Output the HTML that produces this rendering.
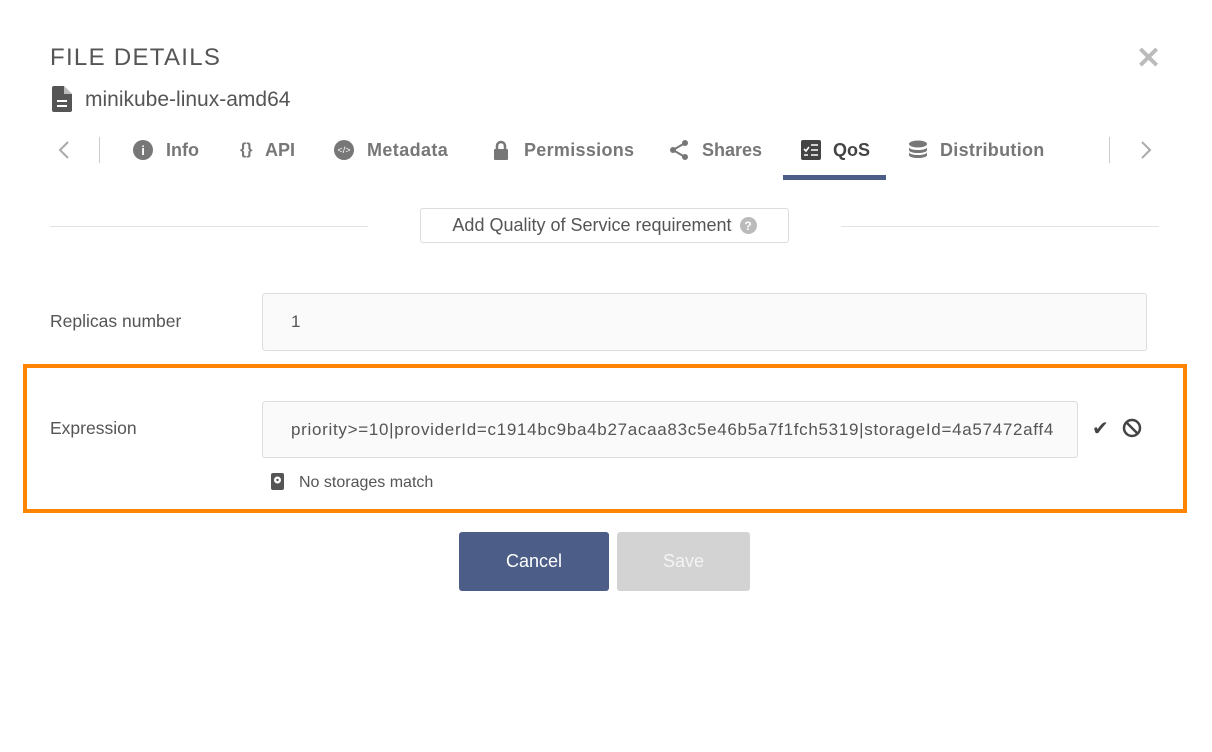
<!DOCTYPE html>
<html><head><meta charset="utf-8"><style>
body{margin:0;width:1212px;height:752px;background:#fff;font-family:"Liberation Sans",sans-serif;color:#555;position:relative;overflow:hidden}
.a{position:absolute}
.tab{position:absolute;top:140px;font-size:18px;font-weight:bold;color:#777;white-space:nowrap;line-height:20px}
.ic{position:absolute;top:140px}
</style></head><body>
<div class="a" style="left:50px;top:44px;font-size:24px;letter-spacing:1.3px;color:#555">FILE DETAILS</div>
<div class="a" style="left:1136px;top:44px;font-size:30px;color:#bbb;font-weight:bold;line-height:30px">✕</div>
<svg class="a" style="left:52px;top:86px" width="20" height="26" viewBox="0 0 20 26"><path d="M0 2Q0 0 2 0H12L20 8V24Q20 26 18 26H2Q0 26 0 24Z" fill="#555"/><path d="M12 0V8H20" fill="#fff" opacity=".6"/><rect x="5" y="14" width="10" height="2" fill="#fff"/><rect x="5" y="19" width="10" height="2" fill="#fff"/></svg>
<div class="a" style="left:85px;top:88px;font-size:21px;color:#555">minikube-linux-amd64</div>
<svg class="a" style="left:57px;top:140px" width="14" height="20" viewBox="0 0 14 20"><path d="M11 2L3 10l8 8" stroke="#aaa" stroke-width="2" fill="none"/></svg>
<div class="a" style="left:99px;top:137px;width:1px;height:26px;background:#ccc"></div>
<span class="ic" style="left:133px;width:20px;height:20px;border-radius:50%;background:#777;color:#fff;font-size:13px;font-weight:bold;display:flex;align-items:center;justify-content:center">i</span><div class="tab" style="left:166px">Info</div>
<div class="tab" style="left:240px;font-size:16px">{}</div><div class="tab" style="left:265px">API</div>
<span class="ic" style="left:334px;width:20px;height:20px;border-radius:50%;background:#777;color:#fff;font-size:9px;display:flex;align-items:center;justify-content:center">&lt;/&gt;</span><div class="tab" style="left:367px;letter-spacing:0.4px">Metadata</div>
<svg class="ic" style="left:493px" width="16" height="20" viewBox="0 0 16 20"><path d="M4 9V6a4 4 0 0 1 8 0v3" stroke="#777" stroke-width="2.5" fill="none"/><rect x="1" y="9" width="14" height="11" rx="1" fill="#777"/></svg><div class="tab" style="left:524px;letter-spacing:0.3px">Permissions</div>
<svg class="ic" style="left:669px" width="20" height="20" viewBox="0 0 20 20"><circle cx="16" cy="3" r="3" fill="#777"/><circle cx="4" cy="10" r="3" fill="#777"/><circle cx="16" cy="17" r="3" fill="#777"/><path d="M16 3L4 10L16 17" stroke="#777" stroke-width="2" fill="none"/></svg><div class="tab" style="left:702px">Shares</div>
<svg class="ic" style="left:801px" width="20" height="20" viewBox="0 0 20 20"><rect width="20" height="20" rx="2" fill="#444"/><path d="M3 9l2 2 3-4" stroke="#fff" stroke-width="1.6" fill="none"/><path d="M10 5h7M10 10h7M10 15h7M3 15h4" stroke="#fff" stroke-width="1.6"/></svg><div class="tab" style="left:833px;color:#444">QoS</div>
<div class="a" style="left:783px;top:175px;width:103px;height:5px;background:#4c5e87"></div>
<svg class="ic" style="left:908px" width="20" height="20" viewBox="0 0 20 20"><ellipse cx="10" cy="4" rx="9" ry="3.5" fill="#777"/><path d="M1 7c0 4 18 4 18 0v3c0 4-18 4-18 0zM1 12c0 4 18 4 18 0v3c0 4-18 4-18 0z" fill="#777"/></svg><div class="tab" style="left:940px;letter-spacing:0.3px">Distribution</div>
<div class="a" style="left:1109px;top:137px;width:1px;height:26px;background:#ccc"></div>
<svg class="a" style="left:1139px;top:140px" width="14" height="20" viewBox="0 0 14 20"><path d="M3 2l8 8-8 8" stroke="#aaa" stroke-width="2" fill="none"/></svg>
<div class="a" style="left:50px;top:226px;width:318px;height:1px;background:#e3e3e3"></div>
<div class="a" style="left:841px;top:226px;width:318px;height:1px;background:#e3e3e3"></div>
<div class="a" style="left:420px;top:208px;height:35px;border:1px solid #ddd;border-radius:3px;font-size:18px;color:#555;display:flex;align-items:center;justify-content:center;gap:8px;box-sizing:border-box;width:369px">Add Quality of Service requirement<span style="width:17px;height:17px;border-radius:50%;background:#bbb;color:#fff;font-size:12px;font-weight:bold;display:inline-flex;align-items:center;justify-content:center">?</span></div>
<div class="a" style="left:50px;top:311px;font-size:17.5px;color:#555">Replicas number</div>
<div class="a" style="left:262px;top:293px;border:1px solid #ddd;border-radius:3px;background:#fafafa;font-size:17px;line-height:56px;padding-left:28px;box-sizing:border-box;width:885px;height:58px">1</div>
<div class="a" style="left:23px;top:364px;width:1164px;height:149px;border:4px solid #ff8500;box-sizing:border-box"></div>
<div class="a" style="left:50px;top:418px;font-size:17.5px;color:#555">Expression</div>
<div class="a" style="left:262px;top:401px;width:816px;height:57px;border:1px solid #ddd;border-radius:3px;background:#fafafa;font-size:17px;line-height:55px;padding-left:28px;box-sizing:border-box;overflow:hidden;white-space:nowrap;letter-spacing:0.7px;color:#555">priority&gt;=10|providerId=c1914bc9ba4b27acaa83c5e46b5a7f1fch5319|storageId=4a57472aff4</div>
<div class="a" style="left:1092px;top:416px;font-size:20px;color:#444">✔</div>
<svg class="a" style="left:1122px;top:418px" width="20" height="20" viewBox="0 0 20 20"><circle cx="10" cy="10" r="8" stroke="#444" stroke-width="2.5" fill="none"/><path d="M4.5 4.5l11 11" stroke="#444" stroke-width="2.5"/></svg>
<svg class="a" style="left:271px;top:473px" width="13" height="17" viewBox="0 0 13 17"><rect width="13" height="17" rx="2" fill="#555"/><circle cx="6.5" cy="7" r="3.5" fill="#fff"/><circle cx="6.5" cy="7" r="1.2" fill="#555"/></svg>
<div class="a" style="left:299px;top:474px;font-size:16px;color:#555">No storages match</div>
<div class="a" style="left:459px;top:532px;width:150px;height:59px;background:#4c5e87;border-radius:3px;color:#fff;font-size:18px;display:flex;align-items:center;justify-content:center">Cancel</div>
<div class="a" style="left:617px;top:532px;width:133px;height:59px;background:#d3d3d3;border-radius:3px;color:#f4f4f4;font-size:18px;display:flex;align-items:center;justify-content:center">Save</div>
</body></html>
